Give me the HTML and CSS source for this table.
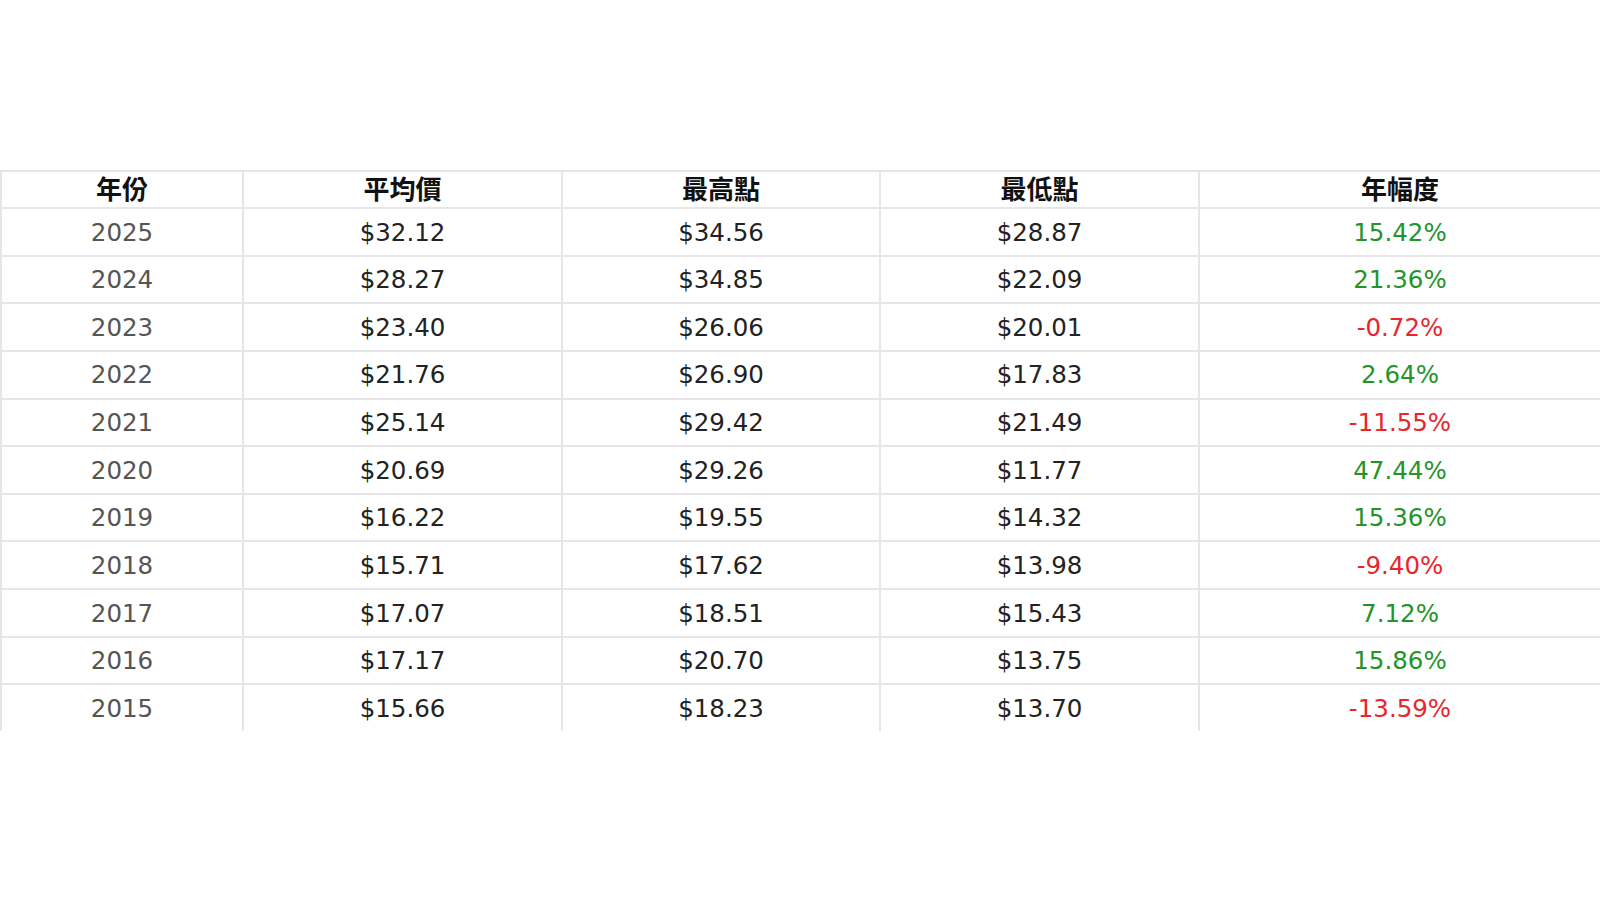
FILE: index.html
```html
<!DOCTYPE html>
<html lang="zh-Hant">
<head>
<meta charset="utf-8">
<title>年度價格</title>
<link rel="stylesheet" href="styles.css">
</head>
<body>
<div class="page">
<table class="prices">
<colgroup>
<col class="c1"><col class="c2"><col class="c3"><col class="c4"><col class="c5">
</colgroup>
<thead>
<tr><th>年份</th><th>平均價</th><th>最高點</th><th>最低點</th><th>年幅度</th></tr>
</thead>
<tbody>
<tr><td class="year">2025</td><td>$32.12</td><td>$34.56</td><td>$28.87</td><td class="up">15.42%</td></tr>
<tr><td class="year">2024</td><td>$28.27</td><td>$34.85</td><td>$22.09</td><td class="up">21.36%</td></tr>
<tr><td class="year">2023</td><td>$23.40</td><td>$26.06</td><td>$20.01</td><td class="down">-0.72%</td></tr>
<tr><td class="year">2022</td><td>$21.76</td><td>$26.90</td><td>$17.83</td><td class="up">2.64%</td></tr>
<tr><td class="year">2021</td><td>$25.14</td><td>$29.42</td><td>$21.49</td><td class="down">-11.55%</td></tr>
<tr><td class="year">2020</td><td>$20.69</td><td>$29.26</td><td>$11.77</td><td class="up">47.44%</td></tr>
<tr><td class="year">2019</td><td>$16.22</td><td>$19.55</td><td>$14.32</td><td class="up">15.36%</td></tr>
<tr><td class="year">2018</td><td>$15.71</td><td>$17.62</td><td>$13.98</td><td class="down">-9.40%</td></tr>
<tr><td class="year">2017</td><td>$17.07</td><td>$18.51</td><td>$15.43</td><td class="up">7.12%</td></tr>
<tr><td class="year">2016</td><td>$17.17</td><td>$20.70</td><td>$13.75</td><td class="up">15.86%</td></tr>
<tr class="last"><td class="year">2015</td><td>$15.66</td><td>$18.23</td><td>$13.70</td><td class="down">-13.59%</td></tr>
</tbody>
</table>
</div>
</body>
</html>
```
FILE: styles.css
```css
html, body {
  margin: 0;
  padding: 0;
  background: #ffffff;
}
.page {
  padding-top: 170px;
  width: 1600px;
}
.prices {
  width: 1600px;
  table-layout: fixed;
  border-collapse: separate;
  border-spacing: 0;
  font-family: "DejaVu Sans", Verdana, "Noto Sans CJK TC", sans-serif;
  font-size: 24.5px;
  color: #222222;
}
.c1 { width: 244px; }
.c2 { width: 319px; }
.c3 { width: 318px; }
.c4 { width: 319px; }
.c5 { width: 400px; }
.prices th,
.prices td {
  text-align: center;
  vertical-align: middle;
  padding: 0;
  border-right: 2px solid #e6e6ea;
  border-bottom: 2px solid #e6e6ea;
}
.prices th:first-child,
.prices td:first-child {
  border-left: 2px solid #e6e6ea;
}
.prices th:last-child,
.prices td:last-child {
  border-right: none;
}
.prices th {
  border-top: 2px solid #e6e6ea;
  font-family: "Noto Sans CJK TC", sans-serif;
  font-weight: 700;
  font-size: 26px;
  color: #111111;
  line-height: 1;
  padding-bottom: 4px;
}
.prices thead tr {
  height: 39px;
}
.prices tbody tr {
  height: 47.65px;
}
.prices tbody tr.last {
  height: 45.65px;
}
.prices tbody tr.last td {
  border-bottom: none;
}
.prices td {
  line-height: 1;
  padding-top: 2px;
}
.year {
  color: #555555;
}
.up {
  color: #259428;
}
.down {
  color: #e8262b;
}
```
